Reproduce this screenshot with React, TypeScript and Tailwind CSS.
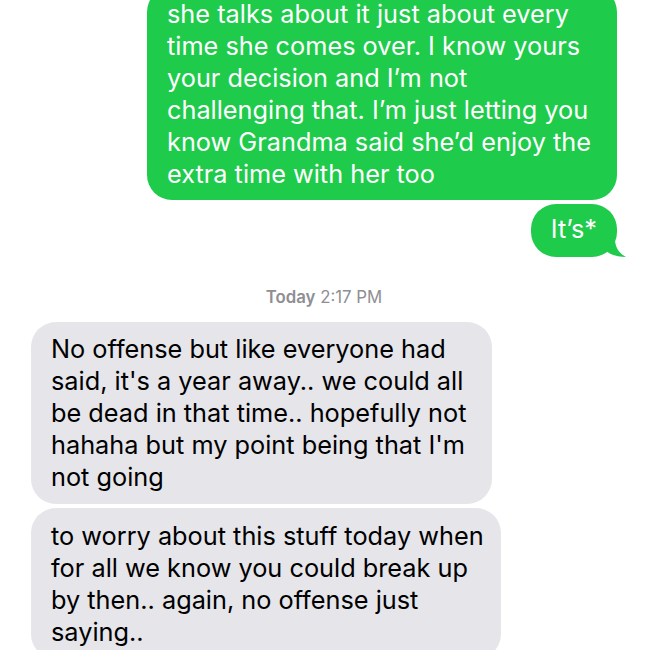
import React from "react";

const green = "bg-[#1fcb4b]";
const gray = "bg-[#e5e5ea]";

function Lines({ lines }: { lines: string[] }) {
  return (
    <>
      {lines.map((l, i) => (
        <div key={i} className="whitespace-nowrap">
          {l}
        </div>
      ))}
    </>
  );
}

export default function App() {
  return (
    <div className="w-[648px] h-[650px] overflow-hidden bg-white font-['Inter','Liberation_Sans',sans-serif] text-[25.3px] leading-[32px] flex flex-col">
      <div className={`${green} text-white ml-[147px] w-[470px] mt-[-13px] rounded-[25px] pl-[20px] pt-[11px] pb-[10px]`}>
        <Lines
          lines={[
            "she talks about it just about every",
            "time she comes over. I know yours",
            "your decision and I\u2019m not",
            "challenging that. I\u2019m just letting you",
            "know Grandma said she\u2019d enjoy the",
            "extra time with her too",
          ]}
        />
      </div>
      <div className="self-end mr-[31px] mt-[4px] relative">
        <div className={`${green} text-white rounded-[25px] pl-[20px] pr-[20px] pt-[9px] pb-[12px] relative z-10`}>
          It{"\u2019"}s*
        </div>
        <svg
          className="absolute right-[-9px] bottom-[0px]"
          width="30"
          height="30"
          viewBox="0 0 30 30"
        >
          <path d="M4 0 L18 0 L19 14 C20 22 24 27 30 30 C22 30 14 28 9 23 C6 20 4 16 4 12 Z" fill="#1fcb4b" />
        </svg>
      </div>
      <div className="mt-[30px] mb-[15px] text-center text-[16.8px] leading-[20px] text-[#8e8e93]">
        <span className="font-semibold">Today</span> 2:17 PM
      </div>
      <div className={`${gray} text-black ml-[31px] w-[461px] rounded-[25px] pl-[20px] pt-[11px] pb-[11px]`}>
        <Lines
          lines={[
            "No offense but like everyone had",
            "said, it's a year away.. we could all",
            "be dead in that time.. hopefully not",
            "hahaha but my point being that I'm",
            "not going",
          ]}
        />
      </div>
      <div className={`${gray} text-black ml-[31px] w-[470px] mt-[4px] rounded-[25px] pl-[20px] pt-[12px] pb-[11px]`}>
        <Lines
          lines={[
            "to worry about this stuff today when",
            "for all we know you could break up",
            "by then.. again, no offense just",
            "saying..",
          ]}
        />
      </div>
    </div>
  );
}
